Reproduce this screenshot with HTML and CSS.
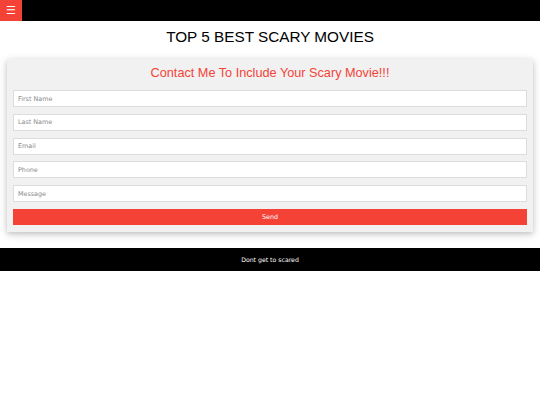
FILE: index.html
```html
<!DOCTYPE html>
<html>
<head>
<meta charset="utf-8">
<link rel="stylesheet" href="styles.css">
</head>
<body>
<div class="topbar">
  <div class="menu-btn">&#9776;</div>
</div>
<h1 class="title">TOP 5 BEST SCARY MOVIES</h1>
<div class="card">
  <h2 class="card-title">Contact Me To Include Your Scary Movie!!!</h2>
  <form class="form">
    <input class="field" type="text" placeholder="First Name">
    <input class="field" type="text" placeholder="Last Name">
    <input class="field" type="text" placeholder="Email">
    <input class="field" type="text" placeholder="Phone">
    <input class="field" type="text" placeholder="Message">
    <button class="send" type="button">Send</button>
  </form>
</div>
<div class="footer">Dont get to scared</div>
</body>
</html>
```
FILE: styles.css
```css
html, body {
  margin: 0;
  padding: 0;
  background: #fff;
  font-family: "Liberation Sans", Arial, sans-serif;
}
.topbar {
  background: #000;
  height: 21px;
  display: flex;
}
.menu-btn {
  width: 22px;
  height: 21px;
  background: #f44336;
  color: #fff;
  font-size: 11px;
  line-height: 21px;
  text-align: center;
  font-family: "DejaVu Sans", sans-serif;
}
.title {
  margin: 0;
  padding: 6px 0 0;
  font-weight: normal;
  font-size: 15.3px;
  text-align: center;
  line-height: 20px;
  color: #000;
}
.card {
  margin: 12px 7px 0;
  background: #f1f1f1;
  box-shadow: 0 2px 5px 0 rgba(0,0,0,0.16), 0 2px 10px 0 rgba(0,0,0,0.12);
  padding: 6px 6px 7px;
}
.card-title {
  margin: 0;
  font-weight: normal;
  font-size: 12.7px;
  line-height: 16px;
  color: #f44336;
  text-align: center;
  padding: 0 0 9px;
}
.form {
  display: flex;
  flex-direction: column;
  gap: 6.75px;
}
.field {
  box-sizing: border-box;
  height: 17px;
  margin: 0;
  border: 1px solid #ddd;
  background: #fff;
  padding: 0 4px;
  font-family: "DejaVu Sans", Verdana, sans-serif;
  font-size: 6.4px;
  outline: none;
}
.field::placeholder {
  color: #8a8a8a;
}
.send {
  box-sizing: border-box;
  height: 16px;
  margin: 0;
  border: none;
  background: #f44336;
  color: #fff;
  font-family: "DejaVu Sans", Verdana, sans-serif;
  font-size: 6.4px;
}
.footer {
  margin-top: 16px;
  background: #000;
  color: #fff;
  height: 23px;
  line-height: 23px;
  text-align: center;
  font-family: "DejaVu Sans", Verdana, sans-serif;
  font-size: 6.2px;
}
```
